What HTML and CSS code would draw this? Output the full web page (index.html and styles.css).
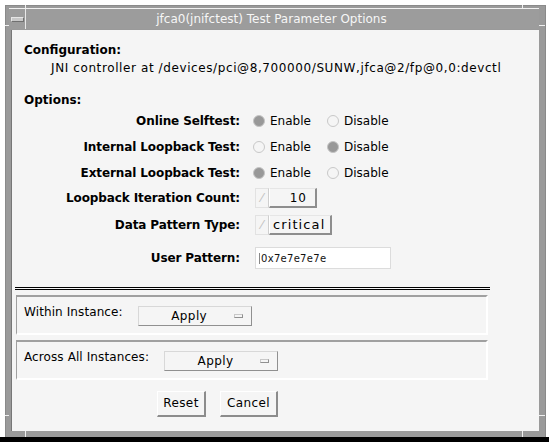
FILE: index.html
```html
<!DOCTYPE html>
<html>
<head>
<meta charset="utf-8">
<link rel="stylesheet" href="styles.css">
</head>
<body>
<div class="frame">
  <div class="titlebar">
    <div class="menu-cell"><span class="menu-btn"></span></div>
    <div class="title">jfca0(jnifctest) Test Parameter Options</div>
  </div>
  <div class="content">
    <div class="params">
      <div class="section-title">Configuration:</div>
      <div class="config-path">JNI controller at /devices/pci@8,700000/SUNW,jfca@2/fp@0,0:devctl</div>
      <div class="section-title options-title">Options:</div>
      <div class="options">
        <div class="label">Online Selftest:</div>
        <div class="radios">
          <span class="radio-opt"><span class="radio on"></span>Enable</span>
          <span class="radio-opt"><span class="radio"></span>Disable</span>
        </div>
        <div class="label">Internal Loopback Test:</div>
        <div class="radios">
          <span class="radio-opt"><span class="radio"></span>Enable</span>
          <span class="radio-opt"><span class="radio on"></span>Disable</span>
        </div>
        <div class="label">External Loopback Test:</div>
        <div class="radios">
          <span class="radio-opt"><span class="radio on"></span>Enable</span>
          <span class="radio-opt"><span class="radio"></span>Disable</span>
        </div>
        <div class="label">Loopback Iteration Count:</div>
        <div class="ctrl">
          <span class="spin"><span class="spin-arrow">⁄</span><span class="spin-value count">10</span></span>
        </div>
        <div class="label">Data Pattern Type:</div>
        <div class="ctrl">
          <span class="spin"><span class="spin-arrow">⁄</span><span class="spin-value pattern">critical</span></span>
        </div>
        <div class="label">User Pattern:</div>
        <div class="ctrl">
          <span class="textfield"><span class="caret"></span>0x7e7e7e7e</span>
        </div>
      </div>
    </div>
    <div class="separator"></div>
    <div class="group">
      <span class="group-label">Within Instance:</span>
      <span class="dropdown"><span class="dd-text">Apply</span><span class="dd-glyph"></span></span>
    </div>
    <div class="group">
      <span class="group-label">Across All Instances:</span>
      <span class="dropdown"><span class="dd-text">Apply</span><span class="dd-glyph"></span></span>
    </div>
    <div class="buttons">
      <span class="btn reset">Reset</span>
      <span class="btn cancel">Cancel</span>
    </div>
  </div>
  <span class="notch notch-top-left"></span>
  <span class="notch notch-top-right"></span>
  <span class="notch notch-left-top"></span>
  <span class="notch notch-left-bottom"></span>
  <span class="notch notch-right-top"></span>
  <span class="notch notch-right-bottom"></span>
  <span class="notch notch-bottom-left"></span>
  <span class="notch notch-bottom-right"></span>
</div>
<div class="bottom-bar"></div>
</body>
</html>
```

FILE: styles.css
```css
html, body {
  margin: 0;
  padding: 0;
  background: #ffffff;
}

body {
  width: 549px;
  height: 442px;
  overflow: hidden;
  font-family: "DejaVu Sans", "Liberation Sans", sans-serif;
  font-size: 12px;
  color: #000;
}

.frame {
  position: relative;
  box-sizing: border-box;
  margin: 5px 0 0 5px;
  width: 541px;
  height: 432px;
  background: #9a9a9a;
  border: 1px solid #8a8a8a;
  border-bottom: none;
  padding: 2px 6px 6px 3px;
}

.titlebar {
  display: flex;
  height: 21px;
  background: #9c9c9c;
  border-top: 1px solid #f0f0f0;
  box-sizing: border-box;
}

.menu-cell {
  width: 16px;
  border-right: 1px solid #e8e8e8;
  display: flex;
  align-items: center;
  justify-content: center;
}

.menu-btn {
  width: 11px;
  height: 3px;
  border: 1px solid #e6e6e6;
  border-right-color: #707070;
  border-bottom-color: #707070;
  background: #c8c8c8;
}

.title {
  flex: 1;
  text-align: center;
  color: #f6f6f6;
  font-size: 12px;
  line-height: 20px;
  letter-spacing: 0;
  padding-right: 22px;
}

.content {
  box-sizing: border-box;
  margin: 1px 0 0 2px;
  width: 528px;
  height: 401px;
  background: #f5f5f5;
  border-left: 1px solid #777;
  padding-top: 12px;
}

.params {
  padding-left: 12px;
}

.section-title {
  font-weight: bold;
  font-size: 12px;
  line-height: 16px;
}

.config-path {
  margin: 2px 0 0 27px;
  line-height: 16px;
  font-size: 12px;
  letter-spacing: 0.6px;
}

.options-title {
  margin-top: 16px;
}

.options {
  display: grid;
  grid-template-columns: 216px 1fr;
  grid-template-rows: 26px 26px 26px 24px 30px 36px;
  column-gap: 13px;
  align-items: center;
}

.label {
  text-align: right;
  font-weight: bold;
  font-size: 12px;
  letter-spacing: -0.1px;
}

.radios {
  display: flex;
  align-items: center;
}

.radio-opt {
  display: flex;
  align-items: center;
  gap: 5px;
  width: 74px;
}

.radio {
  box-sizing: border-box;
  width: 12px;
  height: 12px;
  border-radius: 50%;
  border: 1px solid #c8c8c8;
  background: #f5f5f5;
}

.radio.on {
  background: #989898;
  border-color: #c4c4c4;
}

.ctrl {
  display: flex;
  align-items: center;
}

.spin {
  display: flex;
  height: 20px;
  box-sizing: border-box;
  margin-left: 2px;
}

.spin-arrow {
  box-sizing: border-box;
  width: 14px;
  height: 20px;
  border: 1px solid #e2e2e2;
  border-right: 1px solid #cfcfcf;
  color: #c0c0c0;
  font-size: 12px;
  line-height: 18px;
  text-align: center;
}

.spin-value {
  box-sizing: border-box;
  height: 20px;
  line-height: 18px;
  border-top: 1px solid #e6e6e6;
  border-left: 1px solid #ffffff;
  border-right: 2px solid #8e8e8e;
  border-bottom: 2px solid #8e8e8e;
  background: #f5f5f5;
}

.spin-value.count {
  width: 48px;
  text-align: right;
  padding-right: 8px;
  letter-spacing: 1px;
}

.spin-value.pattern {
  width: 63px;
  padding-left: 3px;
  font-size: 13px;
  letter-spacing: 1.1px;
}

.textfield {
  box-sizing: border-box;
  display: flex;
  align-items: center;
  margin-left: 2px;
  width: 136px;
  height: 22px;
  background: #ffffff;
  border: 1px solid #dcdcdc;
  padding-left: 3px;
  font-size: 10px;
  letter-spacing: 0.3px;
  color: #111;
}

.caret {
  width: 1px;
  height: 11px;
  margin-right: 1px;
  background: #888;
}

.separator {
  margin: 11px 0 0 3px;
  width: 475px;
  height: 1px;
  border-top: 1px solid #000;
  border-bottom: 1px solid #000;
}

.group {
  box-sizing: border-box;
  display: flex;
  align-items: flex-start;
  margin: 5px 0 0 4px;
  width: 472px;
  height: 40px;
  border-top: 2px solid #a0a0a0;
  border-left: 1px solid #a0a0a0;
  border-right: 2px solid #ffffff;
  border-bottom: 2px solid #ffffff;
  padding: 9px 0 0 7px;
}

.group-label {
  font-size: 12px;
  line-height: 12px;
  letter-spacing: 0.1px;
}

.dropdown {
  box-sizing: border-box;
  display: flex;
  align-items: center;
  margin-left: 15px;
  width: 114px;
  height: 20px;
  border-top: 1px solid #d8d8d8;
  border-left: 1px solid #d8d8d8;
  border-right: 1px solid #909090;
  border-bottom: 1px solid #909090;
}

.dd-text {
  flex: 1;
  text-align: center;
  padding-left: 6px;
  font-size: 12px;
  letter-spacing: 0.4px;
}

.dd-glyph {
  width: 7px;
  height: 2px;
  margin-right: 8px;
  border: 1px solid #c8c8c8;
  border-right-color: #909090;
  border-bottom-color: #909090;
}

.buttons {
  display: flex;
  gap: 14px;
  margin: 11px 0 0 145px;
}

.btn {
  box-sizing: border-box;
  height: 26px;
  line-height: 23px;
  text-align: center;
  font-size: 12px;
  letter-spacing: 0.4px;
  border-top: 1px solid #ffffff;
  border-left: 1px solid #ffffff;
  border-right: 2px solid #8c8c8c;
  border-bottom: 2px solid #8c8c8c;
  background: #f5f5f5;
}

.btn.reset {
  width: 49px;
}

.btn.cancel {
  width: 58px;
}

.notch {
  position: absolute;
  background: #f0f0f0;
}

.notch-top-left { left: 19px; top: -1px; width: 1px; height: 3px; }
.notch-top-right { right: 22px; top: -1px; width: 1px; height: 3px; }
.notch-left-top { left: -1px; top: 19px; width: 4px; height: 1px; }
.notch-left-bottom { left: -1px; top: 409px; width: 4px; height: 1px; }
.notch-right-top { right: 0; top: 19px; width: 6px; height: 1px; }
.notch-right-bottom { right: 0; top: 409px; width: 6px; height: 1px; }
.notch-bottom-left { left: 19px; bottom: 0; width: 1px; height: 6px; }
.notch-bottom-right { right: 22px; bottom: 0; width: 1px; height: 6px; }

.bottom-bar {
  height: 5px;
  background: #000;
}
```
